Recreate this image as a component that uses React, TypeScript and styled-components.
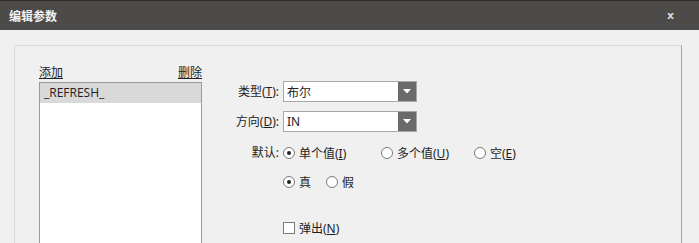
import React from "react";
import styled, { createGlobalStyle } from "styled-components";

const Global = createGlobalStyle`
  html, body { margin: 0; padding: 0; background: #f0f0f0; }
  body { font-family: "Noto Sans", "Noto Sans CJK SC", sans-serif; font-size: 12px; color: #1e1e1e; }
`;

const Window = styled.div`
  width: 699px;
  height: 243px;
  overflow: hidden;
  background: #f0f0f0;
  display: flex;
  flex-direction: column;
`;

const TitleBar = styled.div`
  flex: 0 0 30px;
  height: 30px;
  box-sizing: border-box;
  background: #4c4b49;
  border-top: 1px solid #2c2c2c;
  display: flex;
  align-items: center;
  justify-content: space-between;
  padding: 0 25px 0 9px;
  color: #f2f2f2;
  font-family: "Noto Sans CJK SC", sans-serif;
  font-size: 12px;
  font-weight: 700;
`;

const Close = styled.span`
  font-family: "DejaVu Sans", sans-serif;
  font-size: 11px;
  font-weight: 700;
  color: #d8d8d8;
`;

const Body = styled.div`
  flex: 1 1 auto;
  min-height: 0;
  overflow: hidden;
  padding: 15px 0 0 14px;
`;

const Panel = styled.div`
  width: 668px;
  height: 240px;
  box-sizing: border-box;
  border: 1px solid #dcdcdc;
  border-right-color: #a3a3a3;
  padding: 19px 0 0 24px;
  display: flex;
  gap: 32px;
`;

const ListColumn = styled.div`
  width: 163px;
  display: flex;
  flex-direction: column;
`;

const ListActions = styled.div`
  display: flex;
  justify-content: space-between;
  height: 16px;
  margin-bottom: 1px;
`;

const LinkText = styled.span`
  text-decoration: underline;
  color: #222;
  font-family: "Noto Sans CJK SC", sans-serif;
  font-size: 12px;
  line-height: 14px;
`;

const ListBox = styled.div`
  flex: 1;
  background: #fff;
  border: 1px solid #9a9a9a;
  box-sizing: border-box;
`;

const ListItem = styled.div<{ $selected?: boolean }>`
  height: 20px;
  line-height: 20px;
  padding-left: 4px;
  background: ${(p) => (p.$selected ? "#d9d9d9" : "transparent")};
  font-family: "Open Sans", "Noto Sans", sans-serif;
  font-size: 12px;
  color: #222;
`;

const Form = styled.div`
  display: grid;
  grid-template-columns: 45px auto;
  column-gap: 4px;
  grid-auto-rows: min-content;
  margin-top: 16px;
  align-content: start;
`;

const Label = styled.div<{ $h: number; $mt?: number }>`
  height: ${(p) => p.$h}px;
  margin-top: ${(p) => p.$mt ?? 0}px;
  line-height: ${(p) => p.$h}px;
  text-align: right;
  white-space: nowrap;
  font-size: 12px;
`;

const Cell = styled.div<{ $h: number; $mt?: number }>`
  height: ${(p) => p.$h}px;
  margin-top: ${(p) => p.$mt ?? 0}px;
  display: flex;
  align-items: center;
`;

const Select = styled.div`
  width: 134px;
  height: 21px;
  box-sizing: border-box;
  border: 1px solid #a8a8a8;
  background: #fff;
  display: flex;
  align-items: stretch;
`;

const SelectValue = styled.div`
  flex: 1;
  display: flex;
  align-items: center;
  padding-left: 3px;
  font-size: 12px;
  color: #222;
`;

const SelectButton = styled.div`
  width: 18px;
  background: #6a6a6a;
  display: flex;
  align-items: center;
  justify-content: center;
`;

const Radios = styled.div`
  display: flex;
  align-items: center;
`;

const Option = styled.label<{ $w?: number }>`
  display: flex;
  align-items: center;
  gap: 4px;
  width: ${(p) => (p.$w ? `${p.$w}px` : "auto")};
  font-size: 12px;
  white-space: nowrap;
`;

const OptionText = styled.span`
  white-space: nowrap;
`;

const RadioCircle = styled.span<{ $on?: boolean }>`
  width: 12px;
  height: 12px;
  box-sizing: border-box;
  border-radius: 50%;
  border: 1px solid #7a7a7a;
  background: #fff;
  display: inline-flex;
  align-items: center;
  justify-content: center;
  &::after {
    content: "";
    width: 4px;
    height: 4px;
    border-radius: 50%;
    background: ${(p) => (p.$on ? "#222" : "transparent")};
  }
`;

const Box = styled.span`
  width: 12px;
  height: 12px;
  box-sizing: border-box;
  border: 1px solid #7a7a7a;
  background: #fff;
  display: inline-block;
`;

const U = styled.span`
  text-decoration: underline;
`;

const Arrow = () => (
  <svg width="8" height="5" viewBox="0 0 8 5">
    <path d="M0 0 L8 0 L4 4.5 Z" fill="#fff" />
  </svg>
);

export default function App() {
  return (
    <Window>
      <Global />
      <TitleBar>
        <span>编辑参数</span>
        <Close>x</Close>
      </TitleBar>
      <Body>
        <Panel>
          <ListColumn>
            <ListActions>
              <LinkText>添加</LinkText>
              <LinkText>删除</LinkText>
            </ListActions>
            <ListBox>
              <ListItem $selected>_REFRESH_</ListItem>
            </ListBox>
          </ListColumn>
          <Form>
            <Label $h={21}>
              类型(<U>T</U>):
            </Label>
            <Cell $h={21}>
              <Select>
                <SelectValue>布尔</SelectValue>
                <SelectButton>
                  <Arrow />
                </SelectButton>
              </Select>
            </Cell>
            <Label $h={21} $mt={9}>
              方向(<U>D</U>):
            </Label>
            <Cell $h={21} $mt={9}>
              <Select>
                <SelectValue>IN</SelectValue>
                <SelectButton>
                  <Arrow />
                </SelectButton>
              </Select>
            </Cell>
            <Label $h={20} $mt={11}>
              默认:
            </Label>
            <Cell $h={20} $mt={11}>
              <Radios>
                <Option $w={98}>
                  <RadioCircle $on />
                  <OptionText>
                    单个值(<U>I</U>)
                  </OptionText>
                </Option>
                <Option $w={93}>
                  <RadioCircle />
                  <OptionText>
                    多个值(<U>U</U>)
                  </OptionText>
                </Option>
                <Option>
                  <RadioCircle />
                  <OptionText>
                    空(<U>E</U>)
                  </OptionText>
                </Option>
              </Radios>
            </Cell>
            <div />
            <Cell $h={20} $mt={9}>
              <Radios>
                <Option $w={43}>
                  <RadioCircle $on />
                  <OptionText>真</OptionText>
                </Option>
                <Option>
                  <RadioCircle />
                  <OptionText>假</OptionText>
                </Option>
              </Radios>
            </Cell>
            <div />
            <Cell $h={20} $mt={26}>
              <Option>
                <Box />
                <OptionText>
                  弹出(<U>N</U>)
                </OptionText>
              </Option>
            </Cell>
          </Form>
        </Panel>
      </Body>
    </Window>
  );
}
